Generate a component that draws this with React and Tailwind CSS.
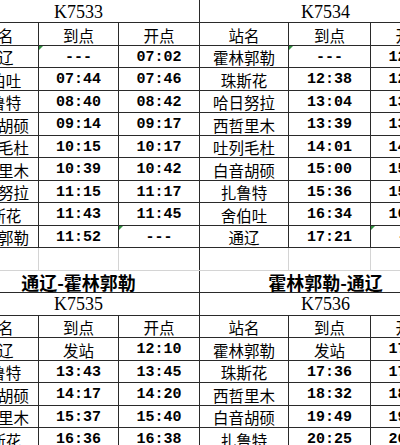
import React from "react";

const CJK = "font-['Noto_Sans_CJK_SC',sans-serif]";
const MONO = "font-['Liberation_Mono',monospace]";
const SERIF = "font-['Liberation_Serif','Noto_Sans_CJK_SC',serif]";

const LEFT = ["w-[81px]", "w-[80px]", "w-[81px]"];
const RIGHT = ["w-[89px]", "w-[82px]", "w-[81px]"];

const k7533 = {
  no: "K7533",
  rows: [
    ["通辽", "---", "07:02"],
    ["舍伯吐", "07:44", "07:46"],
    ["扎鲁特", "08:40", "08:42"],
    ["白音胡硕", "09:14", "09:17"],
    ["吐列毛杜", "10:15", "10:17"],
    ["西哲里木", "10:39", "10:42"],
    ["哈日努拉", "11:15", "11:17"],
    ["珠斯花", "11:43", "11:45"],
    ["霍林郭勒", "11:52", "---"],
  ],
};

const k7534 = {
  no: "K7534",
  rows: [
    ["霍林郭勒", "---", "12:05"],
    ["珠斯花", "12:38", "12:40"],
    ["哈日努拉", "13:04", "13:06"],
    ["西哲里木", "13:39", "13:41"],
    ["吐列毛杜", "14:01", "14:03"],
    ["白音胡硕", "15:00", "15:02"],
    ["扎鲁特", "15:36", "15:38"],
    ["舍伯吐", "16:34", "16:36"],
    ["通辽", "17:21", "---"],
  ],
};

const k7535 = {
  title: "通辽-霍林郭勒",
  no: "K7535",
  rows: [
    ["通辽", "发站", "12:10"],
    ["扎鲁特", "13:43", "13:45"],
    ["白音胡硕", "14:17", "14:20"],
    ["西哲里木", "15:37", "15:40"],
    ["珠斯花", "16:36", "16:38"],
    ["霍林郭勒", "17:10", "终到"],
  ],
};

const k7536 = {
  title: "霍林郭勒-通辽",
  no: "K7536",
  rows: [
    ["霍林郭勒", "发站", "17:00"],
    ["珠斯花", "17:36", "17:38"],
    ["西哲里木", "18:32", "18:34"],
    ["白音胡硕", "19:49", "19:51"],
    ["扎鲁特", "20:25", "20:27"],
    ["通辽", "21:40", "终到"],
  ],
};

// little green corner flag, like a spreadsheet cell note
const Mark = () => (
  <span className="absolute left-0 top-0 h-0 w-0 border-t-[4px] border-r-[4px] border-t-[#2f8f3f] border-r-transparent" />
);

const Cell = ({ w, text, mark }) => {
  const isTime = /[0-9-]/.test(text);
  return (
    <div
      className={`relative flex h-full items-center justify-center border-r border-[#2a2a2a] pt-[3px] ${w} ${
        isTime ? `${MONO} text-[15px] font-bold` : `${CJK} text-[15.5px]`
      }`}
    >
      {mark && <Mark />}
      {text}
    </div>
  );
};

const Row = ({ cols, cells, marks = [] }) => (
  <div className="flex h-[22.5px] border-b border-[#2a2a2a]">
    {cells.map((c, i) => (
      <Cell key={i} w={cols[i]} text={c} mark={marks.includes(i)} />
    ))}
  </div>
);

const Merged = ({ children, first, font }) => (
  <div
    className={`flex items-center justify-center border-r border-b border-[#2a2a2a] pt-[2px] ${
      first ? "h-[23px]" : "h-[22.5px]"
    } ${font}`}
  >
    {children}
  </div>
);

const Blank = ({ cols }) => (
  <div className="flex h-[22.5px] border-b border-[#d4d4d4]">
    {cols.map((w, i) => (
      <div
        key={i}
        className={`h-full ${w} border-r ${i === 2 ? "border-[#2a2a2a]" : "border-[#d4d4d4]"}`}
      />
    ))}
  </div>
);

const Table = ({ cols, top, bottom, className }) => (
  <div className={`flex shrink-0 flex-col text-black ${className}`}>
    <Merged first font={`${SERIF} text-[18px]`}>
      {top.no}
    </Merged>
    <Row cols={cols} cells={["站名", "到点", "开点"]} />
    {top.rows.map((r, i) => (
      <Row
        key={i}
        cols={cols}
        cells={r}
        marks={i === 0 ? [1] : i === top.rows.length - 1 ? [2] : []}
      />
    ))}
    <Blank cols={cols} />
    <Merged font={`${CJK} text-[18px] font-bold`}>{bottom.title}</Merged>
    <Merged font={`${SERIF} text-[18px]`}>{bottom.no}</Merged>
    <Row cols={cols} cells={["站名", "到点", "开点"]} />
    {bottom.rows.map((r, i) => (
      <Row key={i} cols={cols} cells={r} />
    ))}
  </div>
);

export default function App() {
  return (
    <div className="h-[445px] w-[400px] overflow-hidden bg-white">
      <div className="-ml-[42px] flex">
        <Table cols={LEFT} top={k7533} bottom={k7535} className="w-[242px]" />
        <Table cols={RIGHT} top={k7534} bottom={k7536} className="w-[252px]" />
      </div>
    </div>
  );
}
